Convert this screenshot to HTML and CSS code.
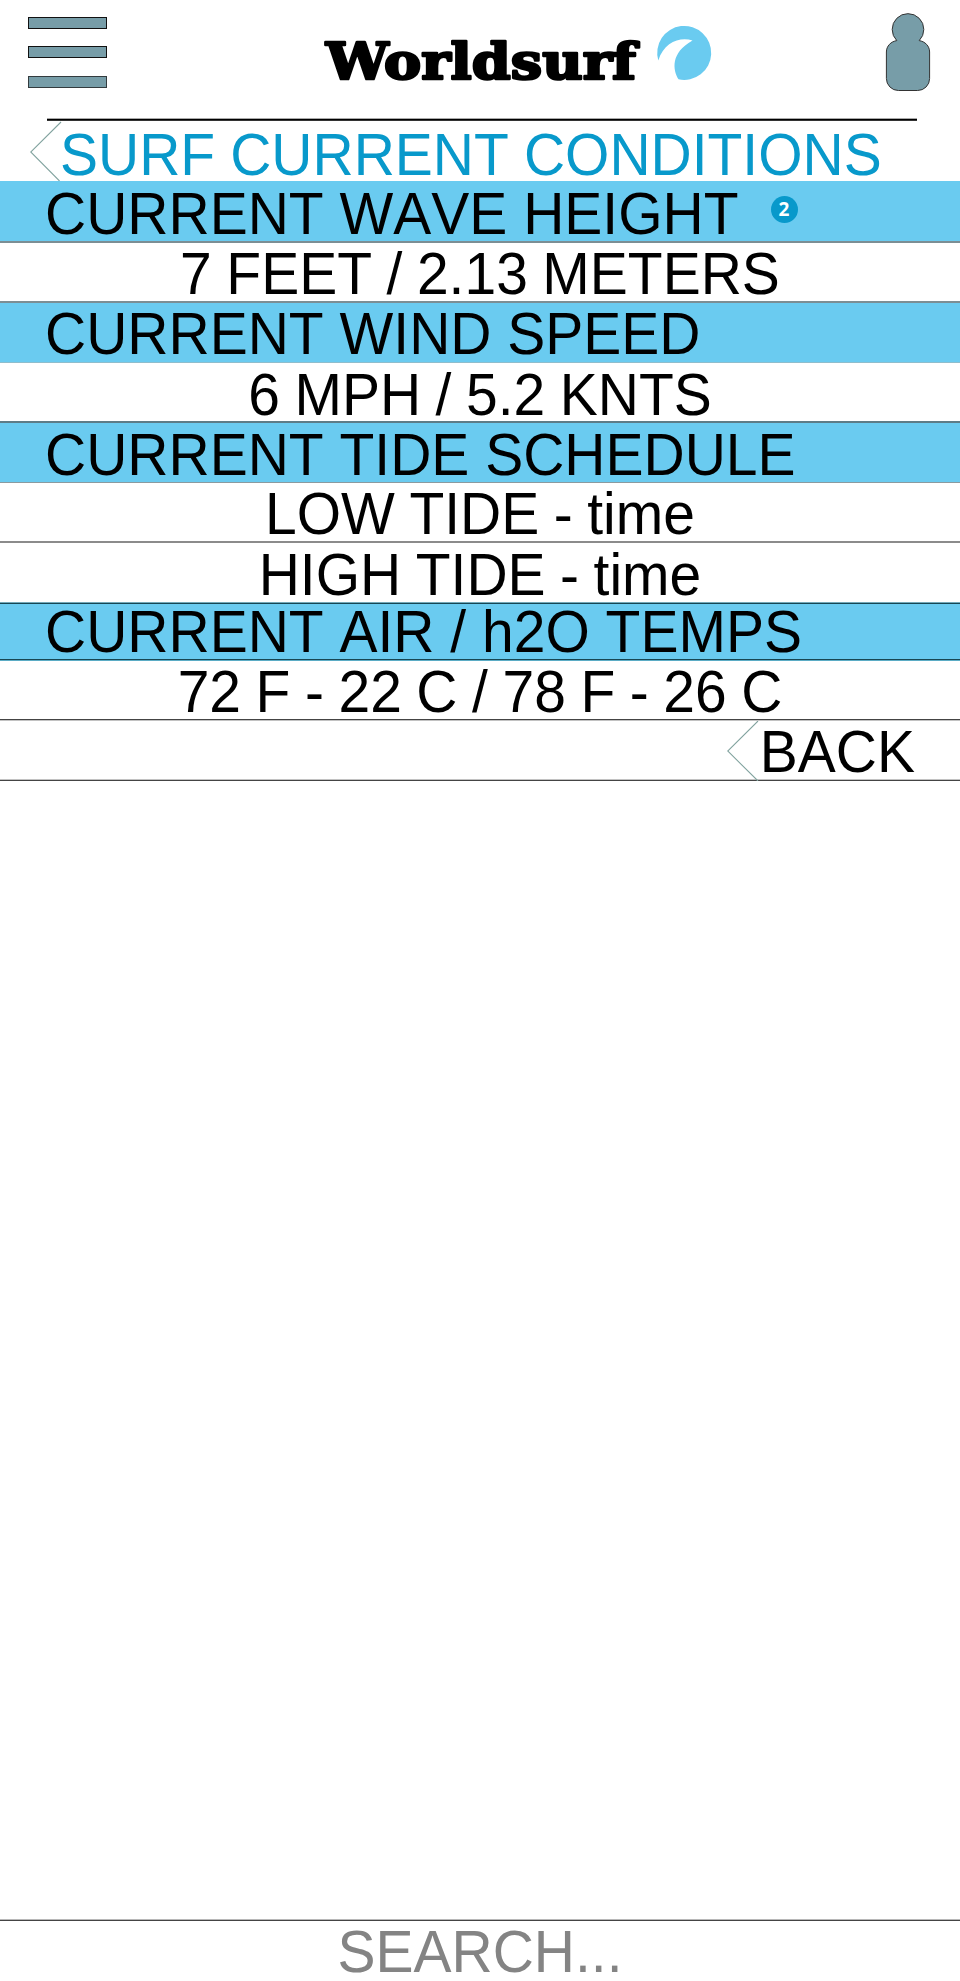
FILE: index.html
```html
<!DOCTYPE html>
<html lang="en">
<head>
<meta charset="utf-8">
<title>Worldsurf</title>
<link rel="stylesheet" href="styles.css">
</head>
<body>
<div class="app">
  <header class="header">
    <button class="menu" aria-label="Menu"><span class="bar"></span><span class="bar"></span><span class="bar last"></span></button>
    <svg class="logo" viewBox="320 20 400 70" width="400" height="70" role="img" aria-label="Worldsurf">
      <text class="wordmark" x="326" y="79" textLength="310" lengthAdjust="spacingAndGlyphs">Worldsurf</text>
      <path class="wave" d="M658.3 60.5A27 27 0 1 1 678.5 79.3C673 70 670 53 692.5 40.4C680 36.5 664 42 658.3 60.5Z"/>
    </svg>
    <svg class="user" viewBox="885 12 46 80" width="46" height="80" role="img" aria-label="Profile">
      <path d="M896.8 40.6A15.8 15.8 0 1 1 919.2 40.6C925 41.500 929.600 46 929.600 52V78.500A12 12 0 0 1 917.600 90.500H898.400A12 12 0 0 1 886.400 78.500V52C886.400 46 891 41.500 896.800 40.600Z"/>
    </svg>
  </header>
  <main>
    <h1 class="row title"><svg class="chevron" viewBox="0 0 32 60" width="32" height="60"><path d="M31 1L.7 31L29.500 60"/></svg><span class="text">SURF CURRENT CONDITIONS</span></h1>
    <div class="row band wave-height"><span class="text">CURRENT WAVE HEIGHT</span><span class="badge">2</span></div>
    <div class="row value feet"><span class="text">7 FEET / 2.13 METERS</span></div>
    <div class="row band wind"><span class="text">CURRENT WIND SPEED</span></div>
    <div class="row value mph"><span class="text">6 MPH / 5.2 KNTS</span></div>
    <div class="row band tide"><span class="text">CURRENT TIDE SCHEDULE</span></div>
    <div class="row value low"><span class="text">LOW TIDE - time</span></div>
    <div class="row value high"><span class="text">HIGH TIDE - time</span></div>
    <div class="row band air"><span class="text">CURRENT AIR / h2O TEMPS</span></div>
    <div class="row value temps"><span class="text">72 F - 22 C / 78 F - 26 C</span></div>
    <div class="row back"><svg class="chevron" viewBox="0 0 32 60" width="32" height="60"><path d="M31 0L.7 30L31 60"/></svg><span class="text">BACK</span></div>
  </main>
  <footer class="row search"><span class="text">SEARCH...</span></footer>
</div>
</body>
</html>
```
FILE: styles.css
```css
* { box-sizing: border-box; }
body { margin: 0; background: #fff; }
.app {
  display: flex;
  flex-direction: column;
  width: 960px;
  height: 1981px;
  overflow: hidden;
  font-family: "Liberation Sans", Arial, sans-serif;
  font-size: 57px;
  color: #000;
}
.header {
  display: flex;
  flex: none;
  align-items: flex-start;
  height: 121px;
  padding: 12px 29px 0 28px;
  background: linear-gradient(#a9a9a9 0 1px, #000 1px 2px, #333 2px 3px) 47px 118px / 870px 3px no-repeat;
}
.menu {
  display: flex;
  flex-direction: column;
  gap: 17px;
  width: 79px;
  margin: 5px 0 0;
  padding: 0;
  border: 0;
  background: none;
}
.bar { height: 12px; border: 1px solid #111; background: #779da8; }
.bar.last { margin-top: 1px; border-color: #333b3e; }
.logo { margin: 8px 0 0 213px; }
.wordmark {
  font: bold 51px "DejaVu Serif", serif;
  fill: #000;
  stroke: #000;
  stroke-width: 2.6px;
  stroke-linejoin: round;
}
.wave { fill: #6acbf0; }
.user { margin-left: auto; fill: #779da8; stroke: #333; stroke-width: 1; }
.row {
  display: flex;
  flex: none;
  align-items: flex-start;
  margin: 0;
  font-size: 57px;
  font-weight: normal;
  line-height: 50px;
  white-space: nowrap;
  font-kerning: none;
}
/* Narrow, tall capitals: stretched upward from the baseline. */
.text { display: block; margin-top: 4px; transform: scaleY(1.045); transform-origin: 0 45px; }
.chevron { flex: none; fill: none; stroke: #82a39f; stroke-width: 1.1; }
.title { height: 60px; padding-left: 30px; color: #0899cb; }
.title .text { margin: 9px 0 0 -2px; word-spacing: -.8px; }
.band { padding: 4px 0 0 45px; background: #6acbf0; }
.value { justify-content: center; padding-top: 2px; word-spacing: -1.3px; }
.wave-height { height: 62px; border-bottom: 2px solid #7c8e94; }
.badge {
  width: 27px;
  height: 27px;
  margin: 11px 0 0 32px;
  border-radius: 50%;
  background: #0899cb;
  color: #fff;
  font: bold 19px/27px "Open Sans", sans-serif;
  text-align: center;
}
.feet { height: 60px; border-bottom: 2px solid #7c8e94; }
.wind { height: 60px; padding-top: 2px; border-bottom: 1px solid #8fbdcc; }
.mph { height: 60px; padding-top: 3px; border-bottom: 2px solid #5d7c87; }
.tide { height: 60px; padding-top: 3px; border-bottom: 1px solid #8b9a9f; }
.low { height: 60px; border-bottom: 2px solid #8b8b8b; }
.high { height: 59px; padding-top: 3px; }
.air { height: 59px; padding-top: 1px; background: linear-gradient(#74a9b9 0 1px, #174653 1px 2px, #6acbf0 2px 57px, #174653 57px 58px, #5bacc5 58px 59px); }
.temps { height: 60px; padding-top: 2px; background: linear-gradient(#444 0 1px, #c2c2c2 1px 2px) 0 58px / 100% 2px no-repeat; }
.back { justify-content: flex-end; height: 60px; padding-right: 45px; background: linear-gradient(#c2c2c2 0 1px, #444 1px 2px) 0 58px / 100% 2px no-repeat; }
.back .text { margin: 6px 0 0 1px; }
.search { justify-content: center; height: 62px; margin-top: auto; padding-top: 4px; color: #848484; background: linear-gradient(#b8b8b8 0 1px, #444 1px 2px) 0 0 / 100% 2px no-repeat; }
```
